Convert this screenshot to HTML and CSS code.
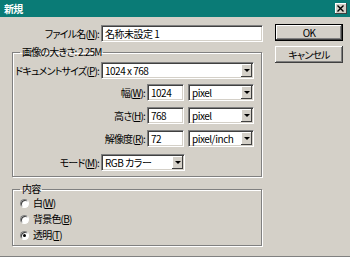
FILE: index.html
```html
<!DOCTYPE html>
<html lang="ja">
<head>
    <meta charset="UTF-8">
    <title>新規</title>
    <link rel="stylesheet" href="styles.css">
</head>
<body>
<div class="window">
    <div class="titlebar">
        <span class="title">新規</span>
        <span class="close">
            <svg width="8" height="7" viewBox="0 0 8 7"><path d="M0.5 0.5 L6.5 6.5 M6.5 0.5 L0.5 6.5" stroke="#000" stroke-width="1.4"/></svg>
        </span>
    </div>

    <div class="dialog">
        <div class="main">
            <div class="row top-row">
                <span class="lbl">ファイル名(<u>N</u>):</span>
                <div class="field name">名称未設定 1</div>
            </div>

            <fieldset class="group size">
                <legend>画像の大きさ: 2.25M</legend>
                <div class="row">
                    <span class="lbl">ドキュメントサイズ(<u>P</u>):</span>
                    <div class="field select doc">1024 x 768<span class="arrow"></span></div>
                </div>
                <div class="row r-w">
                    <span class="lbl wide">幅(<u>W</u>):</span>
                    <div class="field num">1024</div>
                    <div class="field select unit">pixel<span class="arrow"></span></div>
                </div>
                <div class="row r-h">
                    <span class="lbl wide">高さ(<u>H</u>):</span>
                    <div class="field num">768</div>
                    <div class="field select unit">pixel<span class="arrow"></span></div>
                </div>
                <div class="row r-r">
                    <span class="lbl wide">解像度(<u>R</u>):</span>
                    <div class="field num">72</div>
                    <div class="field select unit">pixel/inch<span class="arrow"></span></div>
                </div>
                <div class="row r-m">
                    <span class="lbl">モード(<u>M</u>):</span>
                    <div class="field select mode">RGB カラー<span class="arrow"></span></div>
                </div>
            </fieldset>

            <fieldset class="group contents">
                <legend>内容</legend>
                <div class="radio-row"><span class="radio"></span>白(<u>W</u>)</div>
                <div class="radio-row"><span class="radio"></span>背景色(<u>B</u>)</div>
                <div class="radio-row"><span class="radio checked"></span>透明(<u>T</u>)</div>
            </fieldset>
        </div>

        <div class="buttons">
            <div class="btn default">OK</div>
            <div class="btn">キャンセル</div>
        </div>
    </div>
</div>
</body>
</html>
```

FILE: styles.css
```css
/* Classic Windows dialog */
* {
    box-sizing: border-box;
}

body {
    margin: 0;
    width: 350px;
    height: 257px;
    overflow: hidden;
    background: #d4d0c8;
    font-family: "Noto Sans CJK JP", sans-serif;
    font-size: 10px;
    letter-spacing: -0.8px;
    color: #000;
    font-feature-settings: "palt";
}

u {
    text-decoration: underline;
}

.window {
    height: 257px;
    border-bottom: 1px solid #808080;
}

.titlebar {
    height: 17px;
    background: #0a7b76;
    color: #fff;
    display: flex;
    align-items: center;
    justify-content: space-between;
    padding: 0 3px 0 4px;
}

.title {
    font-weight: bold;
    font-size: 10px;
    line-height: 12px;
}

.close {
    width: 12px;
    height: 11px;
    background: #d4d0c8;
    box-shadow: inset -1px -1px 0 #404040, inset 1px 1px 0 #fff;
    display: flex;
    align-items: center;
    justify-content: center;
}

.dialog {
    display: flex;
    gap: 11px;
    padding: 7px 0 0 12px;
}

.main {
    width: 252px;
    padding-top: 1px;
}

.row {
    display: flex;
    align-items: center;
    height: 17px;
}

.lbl {
    width: 86px;
    margin-right: 2px;
    text-align: right;
    white-space: nowrap;
    line-height: 12px;
}

.top-row .lbl {
    width: 87px;
}

.lbl.wide {
    width: 132px;
}

/* sunken edit box */
.field {
    height: 17px;
    background: #fff;
    border: 1px solid;
    border-color: #808080 #fff #fff #808080;
    box-shadow: inset 1px 1px 0 #404040, inset -1px -1px 0 #d4d0c8;
    padding: 0 2px 0 3px;
    line-height: 15px;
    letter-spacing: -0.5px;
    white-space: nowrap;
}

.name {
    width: 162px;
}

.select {
    display: flex;
    align-items: center;
    padding-right: 1px;
}

.arrow {
    margin-left: auto;
    width: 11px;
    height: 13px;
    background: #d4d0c8;
    box-shadow: inset -1px -1px 0 #404040, inset 1px 1px 0 #fff;
    position: relative;
}

.arrow::after {
    content: "";
    position: absolute;
    left: 3px;
    top: 5px;
    border-left: 3px solid transparent;
    border-right: 3px solid transparent;
    border-top: 3px solid #000;
}

.doc {
    width: 153px;
}

.num {
    width: 37px;
}

.unit {
    width: 66px;
    margin-left: 4px;
}

.mode {
    width: 84px;
}

.r-w { margin-top: 5px; }
.r-h { margin-top: 6px; }
.r-r { margin-top: 6px; }
.r-m { margin-top: 7px; }

/* etched group box */
.group {
    width: 250px;
    margin: 0;
    border: 1px solid #808080;
    box-shadow: 1px 1px 0 #fff, inset 1px 1px 0 #fff;
    padding: 0 7px 5px 0;
}

.group legend {
    margin-left: 7px;
    padding: 0 2px;
    line-height: 12px;
}

.size {
    margin-top: 4px;
    padding-top: 4px;
}

.contents {
    margin-top: 6px;
    padding-bottom: 2px;
}

.radio-row {
    height: 16px;
    display: flex;
    align-items: center;
    padding-left: 7px;
    line-height: 12px;
}

.radio {
    width: 9px;
    height: 9px;
    margin-right: 4px;
    border-radius: 50%;
    border: 1px solid;
    border-color: #808080 #fff #fff #808080;
    background: #fff;
    box-shadow: inset 1px 1px 0 #404040;
    position: relative;
}

.radio.checked::after {
    content: "";
    position: absolute;
    left: 2px;
    top: 2px;
    width: 3px;
    height: 3px;
    border-radius: 50%;
    background: #000;
}

.buttons {
    display: flex;
    flex-direction: column;
    gap: 5px;
    width: 68px;
}

.btn {
    height: 17px;
    background: #d4d0c8;
    box-shadow: inset -1px -1px 0 #404040, inset 1px 1px 0 #fff, inset -2px -2px 0 #808080;
    text-align: center;
    line-height: 17px;
}

.btn.default {
    border: 1px solid #000;
    line-height: 15px;
}
```
